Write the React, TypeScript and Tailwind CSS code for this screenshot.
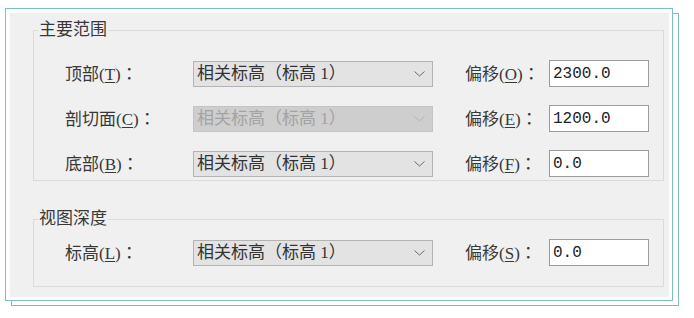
import React from 'react';

const FONT = { fontFamily: '"Liberation Serif", "Noto Sans CJK SC", serif' };

const Chevron = ({ disabled }: { disabled?: boolean }) => (
  <svg width="11" height="6" viewBox="0 0 11 6" className="shrink-0">
    <polyline
      points="0.5,0.5 5.5,5 10.5,0.5"
      fill="none"
      stroke={disabled ? '#b4b4b4' : '#6a6a6a'}
      strokeWidth="1"
    />
  </svg>
);

const Colon = () => (
  <span style={{ fontFamily: '"Noto Sans CJK TC", sans-serif' }}>：</span>
);

type RowProps = {
  label: string;
  keyChar: string;
  offsetKey: string;
  value: string;
  disabled?: boolean;
};

const Row = ({ label, keyChar, offsetKey, value, disabled }: RowProps) => (
  <div className="flex items-center h-[27px]">
    <div className="w-[128px] text-[17px] leading-[20px] text-[#383838] whitespace-nowrap">
      {label}(<span className="underline underline-offset-2">{keyChar}</span>)<Colon />
    </div>
    <div
      className={`w-[240px] h-[26px] flex items-center justify-between pl-[3px] pr-[7px] border text-[17px] whitespace-nowrap ${
        disabled
          ? 'bg-[#cecece] border-[#c4c4c4] text-[#a3a3a3]'
          : 'bg-[#e3e3e3] border-[#b3b3b3] text-[#333333]'
      }`}
    >
      <span className="leading-[20px]">相关标高（标高 1）</span>
      <Chevron disabled={disabled} />
    </div>
    <div className="ml-[32px] w-[84px] text-[17px] leading-[20px] text-[#383838] whitespace-nowrap">
      偏移(<span className="underline underline-offset-2">{offsetKey}</span>)<Colon />
    </div>
    <div
      className="w-[100px] h-[27px] bg-white border border-[#9c9c9c] pl-[3px] flex items-center text-[16px] text-[#222222]"
      style={{ fontFamily: '"Liberation Mono", monospace' }}
    >
      {value}
    </div>
  </div>
);

export default function App() {
  return (
    <div className="w-[694px] h-[318px] bg-white pt-[8px] pl-[5px]" style={FONT}>
      <div className="w-[668px] h-[293px] border border-[#7dbdc5] bg-white pt-[4px] pl-[4px] pr-[3px] pb-[3px] shadow-[6px_5px_0_-1px_#ffffff,6px_5px_0_0_#7dbdc5]">
        <div className="h-full bg-[#f0f0f0] pl-[23px] pr-[5px] pt-[7px] flex flex-col">
          <fieldset className="border border-[#dadada] m-0 p-0">
            <legend className="ml-[4px] px-[1px] text-[17px] leading-[20px] text-[#383838]">主要范围</legend>
            <div className="flex flex-col gap-[18px] pl-[31px] pt-[20px] pb-[3px]">
              <Row label="顶部" keyChar="T" offsetKey="O" value="2300.0" />
              <Row label="剖切面" keyChar="C" offsetKey="E" value="1200.0" disabled />
              <Row label="底部" keyChar="B" offsetKey="F" value="0.0" />
            </div>
          </fieldset>
          <fieldset className="mt-[28px] border border-[#dadada] m-0 p-0">
            <legend className="ml-[4px] px-[1px] text-[17px] leading-[20px] text-[#383838]">视图深度</legend>
            <div className="flex flex-col pl-[31px] pt-[10px] pb-[20px]">
              <Row label="标高" keyChar="L" offsetKey="S" value="0.0" />
            </div>
          </fieldset>
        </div>
      </div>
    </div>
  );
}
